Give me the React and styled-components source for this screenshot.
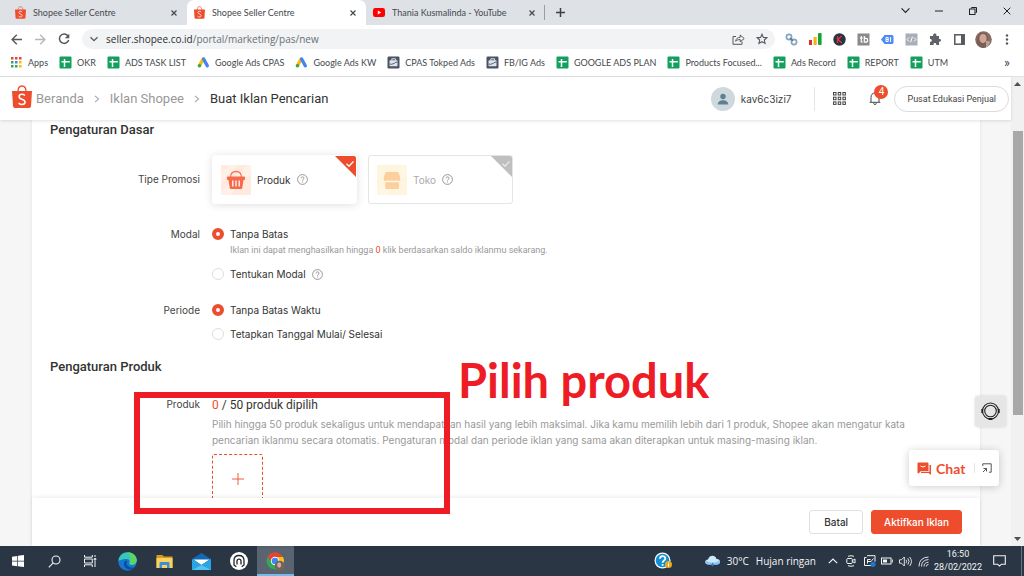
import React from "react";
import styled, { createGlobalStyle, css } from "styled-components";

const ui = '"Open Sans", "Noto Sans", sans-serif';
const uiNarrow = 'Lato, "Open Sans", sans-serif';
const label = "Inter, Roboto, sans-serif";
const orange = "#ee4d2d";

const GlobalStyle = createGlobalStyle`
  *, *::before, *::after { box-sizing: border-box; }
  body { margin: 0; background: #fff; font-family: Roboto, sans-serif; color: #333; }
  button, input { font-family: inherit; }
  h1, h2, p { margin: 0; }
  a { color: inherit; text-decoration: none; }
  svg { display: block; flex: none; }
`;

const Desktop = styled.div`
  position: relative;
  display: flex;
  flex-direction: column;
  height: 100vh;
  overflow: hidden;
`;

const PlainButton = styled.button`
  display: flex;
  align-items: center;
  justify-content: center;
  flex: none;
  padding: 0;
  border: 0;
  background: none;
  color: inherit;
`;

/* Browser chrome */

const TabStrip = styled.div`
  display: flex;
  flex: none;
  height: 25px;
  padding-left: 8px;
  background: #dee1e6;
  font-family: ${uiNarrow};
`;

const Tab = styled.div`
  display: flex;
  align-items: center;
  flex: 0 1 179px;
  min-width: 0;
  gap: 7px;
  padding: 0 9px 0 7px;
  border-radius: 7px 7px 0 0;
  color: #45494d;
  font-size: 9px;
  background: ${(p) => (p.$active ? "#fff" : "transparent")};
  border-right: 1px solid ${(p) => (p.$divided ? "#9a9ea3" : "transparent")};
  ${(p) => p.$divided && css`
    border-radius: 0;
    height: 15px;
    align-self: center;
  `}
`;

const TabTitle = styled.span`
  flex: 1;
  min-width: 0;
  overflow: hidden;
  white-space: nowrap;
`;

const NewTab = styled(PlainButton)`
  width: 31px;
  color: #3c4043;
`;

const WindowControls = styled.div`
  display: flex;
  margin-left: auto;
  height: 21px;
`;

const WindowButton = styled(PlainButton)`
  width: 34px;
  color: #222;
`;

const Toolbar = styled.div`
  display: flex;
  align-items: center;
  flex: none;
  height: 28px;
  padding: 0 5px 0 4px;
  background: #fff;
`;

const ToolButton = styled(PlainButton)`
  width: 24px;
  height: 20px;
  color: ${(p) => (p.$muted ? "#b5b7ba" : "#55595e")};
`;

const Omnibox = styled.div`
  display: flex;
  align-items: center;
  flex: 1;
  min-width: 0;
  height: 20px;
  margin: 0 4px 0 6px;
  padding-right: 1px;
  border-radius: 10px;
  background: #f1f3f4;
`;

const Url = styled.div`
  flex: 1;
  font-family: ${ui};
  font-size: 10px;
  line-height: 16px;
  color: #6b6f74;
  white-space: nowrap;
  b { font-weight: 400; color: #2b2d30; }
`;

const Bookmarks = styled.nav`
  display: flex;
  align-items: center;
  flex: none;
  height: 24px;
  gap: 11px;
  padding: 0 14px 4px 10px;
  border-bottom: 1px solid #dfe1e3;
  font-family: ${uiNarrow};
  font-size: 9px;
  line-height: 16px;
  color: #45494d;
`;

const Bookmark = styled.a`
  display: flex;
  align-items: center;
  gap: 5px;
  white-space: nowrap;
`;

const More = styled(PlainButton)`
  margin-left: auto;
  padding-bottom: 2px;
  font-size: 14px;
  line-height: 16px;
`;

/* Page */

const Viewport = styled.div`
  position: relative;
  display: flex;
  flex: 1;
  min-height: 0;
`;

const Page = styled.div`
  display: flex;
  flex-direction: column;
  flex: 1;
  min-width: 0;
  background: #f6f6f6;
`;

const Header = styled.header`
  position: relative;
  z-index: 1;
  display: flex;
  align-items: center;
  flex: none;
  height: 43px;
  padding: 0 2px 0 12px;
  background: #fff;
  box-shadow: 0 1px 3px rgba(0, 0, 0, 0.12);
`;

const LogoLink = styled.a`
  padding-bottom: 4px;
`;

const Crumbs = styled.nav`
  display: flex;
  align-items: center;
  gap: 10px;
  margin-left: 4px;
  font-size: 13px;
  line-height: 20px;
  color: #999;
  white-space: nowrap;
  span { color: #333; }
`;

const Account = styled.a`
  display: flex;
  align-items: center;
  gap: 6px;
  margin-left: auto;
  padding-right: 23px;
  border-right: 1px solid #e5e5e5;
  font-family: ${label};
  font-size: 10px;
  color: #444;
`;

const Bell = styled(PlainButton)`
  position: relative;
  width: 22px;
  height: 24px;
  margin: 0 8px 0 18px;
  color: #444;
`;

const AppsButton = styled(PlainButton)`
  width: 14px;
  margin-left: 17px;
  color: #444;
`;

const Badge = styled.span`
  position: absolute;
  top: -2px;
  right: -2px;
  width: 14px;
  border-radius: 7px;
  background: ${orange};
  color: #fff;
  font-size: 10px;
  line-height: 14px;
  text-align: center;
`;

const PillButton = styled.button`
  height: 26px;
  padding: 0 12px;
  border: 1px solid #dcdcdc;
  border-radius: 13px;
  background: #fff;
  color: #444;
  font-size: 9px;
  white-space: nowrap;
`;

const Card = styled.main`
  display: flex;
  flex-direction: column;
  flex: 1;
  min-height: 0;
  margin: 0 31px 0 32px;
  background: #fff;
  box-shadow: 0 0 3px rgba(0, 0, 0, 0.1);
`;

const Form = styled.form`
  flex: 1;
  min-height: 0;
  overflow: hidden;
  padding-top: 2px;
`;

const SectionTitle = styled.h2`
  margin-top: ${(p) => (p.$spaced ? 17 : 0)}px;
  padding-left: 18px;
  font-size: 13px;
  font-weight: 500;
  line-height: 16px;
  color: #333;
`;

const Row = styled.section`
  display: grid;
  grid-template-columns: 168px minmax(0, 1fr);
  column-gap: 12px;
  margin-top: ${(p) => p.$top || 20}px;
`;

const RowLabel = styled.div`
  font-family: ${label};
  font-size: 10px;
  line-height: ${(p) => (p.$tall ? 48 : 16)}px;
  text-align: right;
  color: #444;
`;

const Choices = styled.div`
  display: flex;
  gap: 11px;
  padding-bottom: 2px;
`;

const TypeCard = styled.button`
  position: relative;
  display: flex;
  align-items: center;
  gap: 6px;
  width: 145px;
  height: 49px;
  padding: 0 8px;
  overflow: hidden;
  border: 1px solid ${(p) => (p.$active ? "#fff" : "#e5e5e5")};
  border-radius: 3px;
  background: #fff;
  color: ${(p) => (p.$active ? "#333" : "#aaa")};
  font-family: ${label};
  font-size: 10px;
  box-shadow: ${(p) => (p.$active ? "0 1px 9px rgba(0, 0, 0, 0.13)" : "none")};
`;

const Corner = styled.svg`
  position: absolute;
  top: 0;
  right: 0;
`;

const Options = styled.div`
  display: flex;
  flex-direction: column;
  gap: 8px;
`;

const Option = styled.label`
  display: flex;
  align-items: center;
  gap: 6px;
  font-family: ${label};
  font-size: 10px;
  line-height: 16px;
  color: #333;
`;

const Radio = styled.input`
  appearance: none;
  flex: none;
  width: 12px;
  height: 12px;
  margin: 0;
  border: 1px solid #dedede;
  border-radius: 50%;
  background: #fff;
  &:checked { border: 4px solid ${orange}; }
`;

const Hint = styled.p`
  padding-left: 18px;
  font-size: 9px;
  line-height: 16px;
  color: #999;
  em { font-style: normal; color: ${orange}; }
`;

const Count = styled.p`
  font-size: 12px;
  line-height: 18px;
  color: #333;
  em { font-style: normal; color: ${orange}; }
`;

const Description = styled.p`
  max-width: 720px;
  margin-top: 2px;
  font-family: ${label};
  font-size: 10px;
  line-height: 16px;
  color: #999;
`;

const AddProduct = styled(PlainButton)`
  width: 51px;
  height: 50px;
  margin-top: 6px;
  border: 1px dashed ${orange};
  border-radius: 2px;
  color: ${orange};
`;

const Footer = styled.footer`
  display: flex;
  align-items: center;
  justify-content: flex-end;
  flex: none;
  gap: 8px;
  height: 48px;
  padding-right: 18px;
  background: #fff;
  box-shadow: 0 -1px 4px rgba(0, 0, 0, 0.08);
`;

const Action = styled.button`
  height: 24px;
  padding: 0 ${(p) => (p.$primary ? 12 : 14)}px;
  border: 1px solid ${(p) => (p.$primary ? orange : "#e0e0e0")};
  border-radius: 3px;
  background: ${(p) => (p.$primary ? orange : "#fff")};
  color: ${(p) => (p.$primary ? "#fff" : "#333")};
  font-family: ${label};
  font-size: 10px;
  font-weight: 500;
`;

const Scrollbar = styled.div`
  display: flex;
  flex-direction: column;
  align-items: center;
  flex: none;
  width: 13px;
  padding: 5px 0;
  background: #f1f1f1;
  color: #505050;
`;

const Track = styled.div`
  flex: 1;
  width: 10px;
  padding-top: 45px;
`;

const Thumb = styled.div`
  height: 70%;
  background: #a8a8a8;
`;

const Support = styled(PlainButton)`
  position: absolute;
  right: 18px;
  bottom: 119px;
  z-index: 2;
  width: 31px;
  height: 31px;
  border-radius: 3px;
  background: #e6e6e6;
  box-shadow: 0 0 3px rgba(0, 0, 0, 0.15);
  color: #222;
`;

const Chat = styled.div`
  position: absolute;
  right: 25px;
  bottom: 60px;
  z-index: 2;
  display: flex;
  align-items: center;
  width: 90px;
  height: 36px;
  padding: 0 7px 0 8px;
  border-radius: 3px;
  background: #fff;
  box-shadow: 0 1px 8px rgba(0, 0, 0, 0.2);
`;

const ChatButton = styled(PlainButton)`
  gap: 5px;
  color: ${orange};
  font-family: Lato, sans-serif;
  font-size: 14px;
  font-weight: 700;
`;

const ChatExpand = styled(PlainButton)`
  margin-left: auto;
  padding-left: 7px;
  border-left: 1px solid #e5e5e5;
  color: #555;
`;

/* Markup drawn over the page */

const Highlight = styled.div`
  position: absolute;
  left: 134px;
  top: 315px;
  z-index: 3;
  width: 316px;
  height: 122px;
  border: 6px solid #ee1c25;
  pointer-events: none;
`;

const Callout = styled.div`
  position: absolute;
  left: 458px;
  top: 275px;
  z-index: 3;
  color: #ee1c25;
  font-family: Lato, sans-serif;
  font-size: 47px;
  font-weight: 700;
  line-height: 56px;
  white-space: nowrap;
`;

/* Taskbar */

const Taskbar = styled.footer`
  display: flex;
  align-items: stretch;
  flex: none;
  height: 30px;
  background: #2a3644;
  color: #f2f4f6;
  font-family: ${ui};
`;

const SystemButtons = styled.div`
  display: flex;
  margin-right: 1px;
`;

const TaskButton = styled(PlainButton)`
  width: ${(p) => (p.$app ? 37 : 36)}px;
  background: ${(p) => (p.$active ? "#596470" : "none")};
  border-bottom: 2px solid ${(p) => (p.$active ? "#76b9ed" : "transparent")};
  border-top: 2px solid transparent;
`;

const Tray = styled.div`
  display: flex;
  align-items: center;
  margin-left: auto;
`;

const HelpButton = styled(PlainButton)`
  margin-right: 33px;
`;

const Weather = styled(PlainButton)`
  gap: 7px;
  margin-right: 8px;
  font-size: 10px;
  white-space: nowrap;
`;

const TrayButton = styled(PlainButton)`
  width: 18px;
`;

const Clock = styled.div`
  width: 52px;
  font-family: Roboto, sans-serif;
  font-size: 9px;
  line-height: 13px;
  text-align: center;
`;

const NotifyButton = styled(PlainButton)`
  width: 30px;
  height: 30px;
  margin-right: 7px;
`;

const ShowDesktop = styled(PlainButton)`
  width: 3px;
  height: 30px;
  border-left: 1px solid #6b747e;
`;

/* Icons */

const Icon = ({ w = 12, h, vb, children, ...rest }) => (
  <svg width={w} height={h || w} viewBox={vb || `0 0 ${w} ${h || w}`} fill="none" stroke="currentColor" aria-hidden="true" {...rest}>
    {children}
  </svg>
);

const ShopeeIcon = ({ size }) => (
  <Icon w={size} h={Math.round(size * 1.15)} vb="0 0 20 23" stroke="none">
    <path d="M0 6h20l-1 15.2q-.1 1.8-2 1.8H3q-1.900 0-2-1.800z" fill={orange} />
    <path d="M6 6.500C6 2.800 7.500 1 10 1s4 1.800 4 5.500" stroke={orange} strokeWidth="1.300" />
    <path d="M13 10.500q-1.400-1.200-3-1.200c-3.800 0-3.800 4 0 4.900 4.200 1.200 3.900 5.300 0 5.300q-1.900 0-3.400-1.400" stroke="#fff" strokeWidth="1.500" />
  </Icon>
);

const YoutubeIcon = () => (
  <Icon w={12} h={9} stroke="none">
    <rect width="12" height="9" rx="2.200" fill="#f00" />
    <path d="M4.800 2.500v4L8.200 4.500z" fill="#fff" />
  </Icon>
);

const CloseIcon = ({ size = 6, sw = 1.6 }) => (
  <Icon w={size} vb="0 0 8 8" strokeWidth={sw}><path d="M.7.7l6.600 6.600M7.300.7L.7 7.300" /></Icon>
);

const PlusIcon = ({ size, sw = 1 }) => (
  <Icon w={size} vb="0 0 12 12" strokeWidth={sw}><path d="M6 0v12M0 6h12" /></Icon>
);

const ChevronDown = ({ size = 8, sw = 1.2 }) => (
  <Icon w={size} vb="0 0 8 8" strokeWidth={sw}><path d="M.5 2.200L4 5.700l3.500-3.500" /></Icon>
);

const ChevronRight = () => (
  <Icon w={6} h={8} strokeWidth="1.100" stroke="#aaa"><path d="M1 .8L4.600 4 1 7.200" /></Icon>
);

const SheetIcon = () => (
  <Icon w={13} stroke="none">
    <rect x=".5" y=".5" width="12" height="12" rx="1" fill="#12a05c" />
    <path d="M5.500 3v8M2.500 5.700h8.300" stroke="#fff" strokeWidth="1.500" />
  </Icon>
);

const AdsIcon = () => (
  <Icon w={13} stroke="none" strokeLinecap="round">
    <path d="M6 3.300L2.500 9.500" stroke="#fbbc04" strokeWidth="3.400" />
    <path d="M6.600 3L10.300 9.700" stroke="#4285f4" strokeWidth="3.400" />
    <circle cx="2.500" cy="9.700" r="1.800" fill="#34a853" />
  </Icon>
);

const CaseIcon = () => (
  <Icon w={13} stroke="none">
    <rect x=".5" y=".5" width="12" height="12" rx="1.200" fill="#4a5364" />
    <path d="M4.800 4.500V2.800h3.800v1.700" stroke="#dfe3ea" strokeWidth="1" />
    <rect x="2.500" y="4.300" width="8" height="6" rx=".7" fill="#dfe3ea" />
    <path d="M2.500 8l2 .3 3-1 1.500-1.200 1.500.2" stroke="#4a5364" strokeWidth=".9" />
  </Icon>
);

const AppsIcon = () => (
  <Icon w={13} h={11} stroke="none">
    {["#ea4335", "#ea4335", "#ea4335", "#34a853", "#4285f4", "#fbbc04", "#34a853", "#34a853", "#fbbc04"].map((c, i) => (
      <rect key={i} x={1 + (i % 3) * 4} y={Math.floor(i / 3) * 4} width="2.500" height="2.500" fill={c} />
    ))}
  </Icon>
);

const HelpIcon = () => (
  <Icon w={11} stroke="#8c8c8c" strokeWidth=".9">
    <circle cx="5.500" cy="5.500" r="4.900" />
    <path d="M4 4.400c0-2 3-2 3-.2 0 1.200-1.500 1.200-1.500 2.500M5.500 7.600v.9" />
  </Icon>
);

const CheckCorner = ({ color, mark }) => (
  <Corner width="21" height="21" viewBox="0 0 21 21" fill="none" aria-hidden="true">
    <path d="M0 0h21v21z" fill={color} />
    <path d="M11.500 7.700l2.500 2.600 4.500-4.900" stroke={mark} strokeWidth="1.300" />
  </Corner>
);

const BasketIcon = () => (
  <Icon w={30} stroke="none">
    <rect width="30" height="30" fill="#ffeadd" />
    <path d="M0 8L8 0h9L0 17zM0 27L27 0h3v9L9 30H0z" fill="#fff1e8" />
    <path d="M9.500 12.500c0-4.500 2-6 5.500-6s5.500 1.500 5.500 6" stroke="#f7755a" strokeWidth="1.300" />
    <rect x="6" y="11.500" width="18" height="3.600" rx=".8" fill="#f7694b" />
    <path d="M7.500 15h15l-1.300 8.200q-.1.800-1 .8H9.800q-.9 0-1-.8z" fill="#f7694b" />
    <path d="M11.800 15.500v6M15 15.500v6M18.200 15.500v6" stroke="#fff" strokeWidth="1.300" />
  </Icon>
);

const StoreIcon = () => (
  <Icon w={30} stroke="none">
    <rect width="30" height="30" fill="#fff4dd" />
    <path d="M0 27L27 0h3v9L9 30H0z" fill="#fff7e6" />
    <path d="M9.500 7h11q1 0 1.300 1l1.500 5q.5 3-1.700 3-1.800 0-2.200-1-.8 1-2.200 1T15 15q-.8 1-2.200 1t-2.200-1q-.8 1-2.200 1-2 0-1.700-3l1.500-5q.3-1 1.300-1z" fill="#fbcf9e" />
    <path d="M8.200 17.500q1.700 0 2.400-.8 1 .8 2.200.8t2.200-.8q1 .8 2.200.8t2.200-.8q.8.800 2.600.8v5q0 1.500-1.500 1.500H9.700q-1.500 0-1.500-1.500z" fill="#fbcf9e" />
  </Icon>
);

const ShareIcon = () => (
  <Icon w={13} h={12}>
    <path d="M4 3.500H1v7.800h9V8.500" />
    <path d="M3.700 8.300c.3-2.700 2-4 4.500-4V2l4 3.500-4 3.300V6.500c-2 0-3.300.5-4.500 1.800z" />
  </Icon>
);

const StarIcon = () => (
  <Icon w={12} strokeWidth="1.100"><path d="M6 1.200l1.400 3.200 3.500.3L8.300 7l.8 3.500L6 8.700l-3.100 1.800L3.700 7 1.100 4.700l3.500-.3z" /></Icon>
);

const extensions = [
  ["Link checker", <Icon w={13} strokeWidth="1.700" stroke="#86a5bd"><circle cx="4" cy="4" r="2.600" /><circle cx="9" cy="9" r="2.600" /><path d="M5 5l3 3" stroke="#5c7c96" /></Icon>],
  ["Traffic bars", <Icon w={13} h={12} stroke="none"><rect y="7" width="3" height="5" fill="#e22b2b" /><rect x="4.500" y="4" width="3.200" height="8" fill="#f3b51c" /><rect x="9" width="3.600" height="12" rx="1" fill="#14a432" /></Icon>],
  ["Keywords", <Icon w={13} stroke="none"><circle cx="6.500" cy="6.500" r="6.200" fill="#263442" /><path d="M4.500 3v7M8.600 3L5 6.500 8.800 10" stroke="#e0323b" strokeWidth="1.300" /></Icon>],
  ["Tag buddy", <Icon w={13} stroke="none"><rect x=".5" y=".5" width="12" height="12" fill="#8a8a8a" /><path d="M4.300 3v6h1.500M2.800 5h3M7.300 3v6.200h1.500q1.800 0 1.800-2T8.800 5.300H7.300" stroke="#fff" strokeWidth="1.200" /></Icon>],
  ["Label tool", <Icon w={13} stroke="none"><path d="M0 6.500L3.500 2H11q1.500 0 1.500 1.500v6Q12.500 11 11 11H3.500z" fill="#4c8bf5" /><path d="M5 4.500h2.200v4H5zM5 6.500h2.200M9.600 4v5" stroke="#fff" /></Icon>],
  ["Code view", <Icon w={13} stroke="none"><rect x=".5" y=".5" width="12" height="12" fill="#a9adb6" /><path d="M4 4.500l-2 2 2 2M9 4.500l2 2-2 2M7.400 3.800L5.600 9.200" stroke="#fff" /></Icon>],
  ["Extensions", <Icon w={12} stroke="none"><path d="M1 3h3.200c-.8-3.300 4-3.300 3.200 0H10v3c2.700-.6 2.700 3.200 0 2.700V12H7.200c.6-2.600-3.200-2.600-2.600 0H1V8.700c2.400.5 2.400-3 0-2.600z" fill="#5f6368" /></Icon>],
  ["Side panel", <Icon w={11} strokeWidth="1.500" stroke="#55595e"><rect x=".8" y=".8" width="9.400" height="9.400" /><path d="M7 1h3v9H7z" fill="#55595e" stroke="none" /></Icon>],
];

const ProfileIcon = () => (
  <Icon w={17} stroke="none">
    <circle cx="8.500" cy="8.500" r="8.300" fill="#8a6c62" />
    <path d="M2 13.500C1 6 4 1.500 8 1.500s6 4 5 10l-2 5q-6 1.500-9-3z" fill="#7a5f57" />
    <ellipse cx="8" cy="7.500" rx="3.600" ry="4.600" fill="#cfa596" />
    <path d="M11 10q4-1 4 1.500-1 3.500-4 5z" fill="#b3a19c" />
  </Icon>
);

const Dots = () => (
  <Icon w={4} h={11} stroke="none" fill="#55595e">
    <circle cx="2" cy="1.500" r="1.200" /><circle cx="2" cy="5.500" r="1.200" /><circle cx="2" cy="9.500" r="1.200" />
  </Icon>
);

const bookmarks = [
  [AppsIcon, "Apps"],
  [SheetIcon, "OKR"],
  [SheetIcon, "ADS TASK LIST"],
  [AdsIcon, "Google Ads CPAS"],
  [AdsIcon, "Google Ads KW"],
  [CaseIcon, "CPAS Tokped Ads"],
  [CaseIcon, "FB/IG Ads"],
  [SheetIcon, "GOOGLE ADS PLAN"],
  [SheetIcon, "Products Focused..."],
  [SheetIcon, "Ads Record"],
  [SheetIcon, "REPORT"],
  [SheetIcon, "UTM"],
];

const Browser = () => (
  <>
    <TabStrip>
      <Tab>
        <ShopeeIcon size={11} />
        <TabTitle>Shopee Seller Centre</TabTitle>
        <PlainButton aria-label="Close tab"><CloseIcon /></PlainButton>
      </Tab>
      <Tab $active>
        <ShopeeIcon size={11} />
        <TabTitle>Shopee Seller Centre</TabTitle>
        <PlainButton aria-label="Close tab"><CloseIcon /></PlainButton>
      </Tab>
      <Tab $divided>
        <YoutubeIcon />
        <TabTitle>Thania Kusmalinda - YouTube</TabTitle>
        <PlainButton aria-label="Close tab"><CloseIcon /></PlainButton>
      </Tab>
      <NewTab aria-label="New tab"><PlusIcon size={9} sw={2} /></NewTab>
      <WindowControls>
        <WindowButton aria-label="Search tabs"><ChevronDown size={9} sw={1} /></WindowButton>
        <WindowButton aria-label="Minimise"><Icon w={8} h={2}><path d="M0 1h8" /></Icon></WindowButton>
        <WindowButton aria-label="Restore"><Icon w={8}><path d="M2.500 1.500v-1h5v5h-1" /><rect x=".5" y="2" width="5.500" height="5.500" /></Icon></WindowButton>
        <WindowButton aria-label="Close"><CloseIcon size={8} sw={1} /></WindowButton>
      </WindowControls>
    </TabStrip>
    <Toolbar>
      <ToolButton aria-label="Back"><Icon w={11} strokeWidth="1.400"><path d="M11 5.500H1.200M5.800.8L1.100 5.500l4.700 4.700" /></Icon></ToolButton>
      <ToolButton $muted aria-label="Forward"><Icon w={11} strokeWidth="1.300"><path d="M0 5.500h9.800M5.200.8l4.700 4.700-4.700 4.700" /></Icon></ToolButton>
      <ToolButton aria-label="Reload"><Icon w={12} strokeWidth="1.500"><path d="M10.300 3.400A4.700 4.700 0 1 0 10.700 7" /><path d="M11.300.7v4.500H6.800z" fill="currentColor" stroke="none" /></Icon></ToolButton>
      <Omnibox>
        <ToolButton aria-label="Site details"><ChevronDown sw={1.300} /></ToolButton>
        <Url><b>seller.shopee.co.id</b>/portal/marketing/pas/new</Url>
        <ToolButton aria-label="Share"><ShareIcon /></ToolButton>
        <ToolButton aria-label="Bookmark this tab"><StarIcon /></ToolButton>
      </Omnibox>
      {extensions.map(([name, icon]) => (
        <ToolButton key={name} aria-label={name}>{icon}</ToolButton>
      ))}
      <ToolButton aria-label="Profile"><ProfileIcon /></ToolButton>
      <ToolButton aria-label="Menu"><Dots /></ToolButton>
    </Toolbar>
    <Bookmarks>
      {bookmarks.map(([Glyph, name]) => (
        <Bookmark href="#" key={name}><Glyph />{name}</Bookmark>
      ))}
      <More aria-label="More bookmarks">»</More>
    </Bookmarks>
  </>
);

const PageHeader = () => (
  <Header>
    <LogoLink href="#" aria-label="Shopee"><ShopeeIcon size={20} /></LogoLink>
    <Crumbs>
      <a href="#">Beranda</a><ChevronRight />
      <a href="#">Iklan Shopee</a><ChevronRight />
      <span>Buat Iklan Pencarian</span>
    </Crumbs>
    <Account href="#">
      <Icon w={24} stroke="none">
        <circle cx="12" cy="12" r="12" fill="#cfd8dc" />
        <circle cx="12" cy="9.500" r="2.700" fill="#5f8093" />
        <path d="M6.800 17.500c0-5.600 10.400-5.600 10.400 0z" fill="#5f8093" />
      </Icon>
      kav6c3izi7
    </Account>
    <AppsButton aria-label="Apps">
      <Icon w={13} strokeWidth="1">
        {[0, 1, 2, 3, 4, 5, 6, 7, 8].map((i) => (
          <rect key={i} x={0.5 + (i % 3) * 4.700} y={0.5 + Math.floor(i / 3) * 4.700} width="2.500" height="2.500" />
        ))}
      </Icon>
    </AppsButton>
    <Bell aria-label="Notifications">
      <Icon w={12} h={13}><path d="M.7 10.300h10.600M2 10V5.500C2 2.500 3.500 1 6 1s4 1.500 4 4.500V10M4.700 11.200q.1 1.300 1.300 1.300t1.300-1.300" /></Icon>
      <Badge>4</Badge>
    </Bell>
    <PillButton>Pusat Edukasi Penjual</PillButton>
  </Header>
);

const AdForm = () => (
  <Form>
    <SectionTitle>Pengaturan Dasar</SectionTitle>
    <Row $top={17}>
      <RowLabel $tall>Tipe Promosi</RowLabel>
      <Choices>
        <TypeCard type="button" $active aria-pressed="true">
          <BasketIcon />Produk <HelpIcon /><CheckCorner color={orange} mark="#fff" />
        </TypeCard>
        <TypeCard type="button" aria-pressed="false">
          <StoreIcon />Toko <HelpIcon /><CheckCorner color="#bfbfbf" mark="#e8e8e8" />
        </TypeCard>
      </Choices>
    </Row>
    <Row>
      <RowLabel>Modal</RowLabel>
      <Options>
        <div>
          <Option><Radio type="radio" name="modal" defaultChecked />Tanpa Batas</Option>
          <Hint>Iklan ini dapat menghasilkan hingga <em>0</em> klik berdasarkan saldo iklanmu sekarang.</Hint>
        </div>
        <Option><Radio type="radio" name="modal" />Tentukan Modal<HelpIcon /></Option>
      </Options>
    </Row>
    <Row>
      <RowLabel>Periode</RowLabel>
      <Options>
        <Option><Radio type="radio" name="periode" defaultChecked />Tanpa Batas Waktu</Option>
        <Option><Radio type="radio" name="periode" />Tetapkan Tanggal Mulai/ Selesai</Option>
      </Options>
    </Row>
    <SectionTitle $spaced>Pengaturan Produk</SectionTitle>
    <Row $top={21}>
      <RowLabel>Produk</RowLabel>
      <div>
        <Count><em>0</em> / 50 produk dipilih</Count>
        <Description>
          Pilih hingga 50 produk sekaligus untuk mendapatkan hasil yang lebih maksimal. Jika kamu memilih lebih dari 1 produk, Shopee akan mengatur kata pencarian iklanmu secara otomatis. Pengaturan modal dan periode iklan yang sama akan diterapkan untuk masing-masing iklan.
        </Description>
        <AddProduct type="button" aria-label="Tambah produk"><PlusIcon size={12} sw={0.9} /></AddProduct>
      </div>
    </Row>
  </Form>
);

const BottomBar = () => (
  <Taskbar>
    <SystemButtons>
      <TaskButton aria-label="Start"><Icon w={12} stroke="none" fill="#fff"><path d="M0 1.700l5.300-.8v4.800H0zM6 .8L12 0v5.700H6zM0 6.400h5.300v4.800L0 10.400zM6 6.400h6V12l-6-.8z" /></Icon></TaskButton>
      <TaskButton aria-label="Search"><Icon w={13} strokeWidth="1.100"><circle cx="8" cy="5" r="4" /><path d="M5.200 7.900L.8 12.300" /></Icon></TaskButton>
      <TaskButton aria-label="Task view"><Icon w={13} h={12}><path d="M.5 0v2.200h7.800V0M.5 12V9.800h7.800V12M.5 4h7.800v4H.5zM11 0v2M11 6v6M10.200 3.500h1.600v1.500h-1.600z" /></Icon></TaskButton>
    </SystemButtons>
    <TaskButton $app aria-label="Edge">
      <Icon w={19} stroke="none">
        <circle cx="9.500" cy="9.500" r="9.200" fill="#1478cf" />
        <path d="M.4 9C1 3.500 5 .3 9.500.3c5.500 0 9.200 3.900 9.200 7.700 0 3.500-2.700 4.700-4.700 4.700-1.700 0-2.800-.7-2.600-1.500.8-1.200.6-4.200-2.700-4.200C4.500 7-.2 9 .4 9z" fill="#3ac6b8" />
        <path d="M10 .3c5.200.2 8.700 3.900 8.700 7.700 0 3.500-2.700 4.700-4.700 4.700-1.700 0-2.800-.7-2.600-1.500 2-3.700.6-8-1.400-10.900z" fill="#5ad46b" />
        <path d="M6 11c-.5 3.500 2.500 6.500 6 6.500 2 0 4-1 5-2.500-3 1.500-8.500.5-8.500-4 0-1 .5-1.500 1-2C7.500 8.500 6.200 9.500 6 11z" fill="#0b4c9c" />
      </Icon>
    </TaskButton>
    <TaskButton $app aria-label="File Explorer">
      <Icon w={17} h={15} stroke="none">
        <path d="M.5 1h6l1.300 1.500h8.700V14H.5z" fill="#d99a1c" />
        <path d="M.5 4h16v10H.5z" fill="#fbd25e" />
        <path d="M3.500 14V9q0-1 1-1h8q1 0 1 1v5H11v-3H6v3z" fill="#3a8fdc" />
      </Icon>
    </TaskButton>
    <TaskButton $app aria-label="Mail">
      <Icon w={19} h={17} stroke="none">
        <path d="M0 6L9.500 0 19 6v11H0z" fill="#1168b3" />
        <path d="M1.500 6.500h16L9.500 12z" fill="#fff" />
        <path d="M0 6l9.500 6L19 6v11H0z" fill="#29a4e4" />
        <path d="M0 17l9.500-5L19 17z" fill="#52c3f2" />
      </Icon>
    </TaskButton>
    <TaskButton $app aria-label="Workspace">
      <Icon w={18} stroke="none">
        <circle cx="9" cy="9" r="9" fill="#fff" />
        <path d="M6.300 14.800L4 13V8.500C4 5.300 6 3.500 9 3.500s5 1.800 5 5V13l-2.300 1.800M7 12.500V9.200q0-2 2-2t2 2v3.300" stroke="#20262d" strokeWidth="1.300" />
      </Icon>
    </TaskButton>
    <TaskButton $app $active aria-label="Chrome">
      <Icon w={19} stroke="none">
        <circle cx="9" cy="9" r="8.500" fill="#31a853" />
        <path d="M1.600 4.800a8.500 8.500 0 0 1 14.800 0L9 9.500z" fill="#e54335" />
        <path d="M9 5h8a8.500 8.500 0 0 1-7 12.500l3-7z" fill="#fbc116" />
        <path d="M1.600 4.800L6.500 11 9 5h8L16.400 4.800C13-1 5-1 1.600 4.800z" fill="#e54335" />
        <circle cx="9" cy="9" r="4.200" fill="#fff" />
        <circle cx="9" cy="9" r="3.300" fill="#4285f4" />
        <circle cx="13.800" cy="13.800" r="5" fill="#75645b" />
        <ellipse cx="13.200" cy="13" rx="2" ry="2.700" fill="#cdb1a2" />
      </Icon>
    </TaskButton>
    <Tray>
      <HelpButton aria-label="Help">
        <Icon w={18} stroke="none">
          <circle cx="8.500" cy="8.500" r="8" fill="#fff" /><circle cx="8.500" cy="8.500" r="6.800" fill="#108fd5" />
          <path d="M6 6.700c0-3.400 5.300-3.400 5.300-.3 0 2.200-2.700 2-2.700 4.400M8.600 12v1.800" stroke="#fff" strokeWidth="1.800" />
          <circle cx="14.500" cy="12.500" r="3.500" fill="#e9a91c" /><path d="M14.500 10.500v.8M14.500 12v2.500" stroke="#fff" />
        </Icon>
      </HelpButton>
      <Weather>
        <Icon w={15} h={12} stroke="none">
          <path d="M3.500 9.500C-1 9.500-.5 4.500 3 4.500 4-.5 10.500-.5 11.500 4c4.500-.3 4.500 5.500.5 5.500z" fill="#cfe7fb" />
          <path d="M3.500 9.500C0 9.500-.3 6.500 1.500 5.500q2 2.500 6 2 4 .5 6.700-2.300c1.500 2 .3 4.300-2.200 4.300z" fill="#8ec5f2" />
          <path d="M7.500 7.500q2.200 2.600 0 4-2.200-1.400 0-4z" fill="#1d7fdb" />
        </Icon>
        <span>30°C</span><span>Hujan ringan</span>
      </Weather>
      <TrayButton aria-label="Show hidden icons"><Icon w={10} h={6} strokeWidth="1.200"><path d="M.8 5.200L5 1l4.200 4.200" /></Icon></TrayButton>
      <TrayButton aria-label="Meet now"><Icon w={10} h={12}><rect x=".8" y="3.500" width="5.500" height="5" rx="1" /><path d="M6.500 5.500L9 4v4L6.500 6.700M2 1.300Q5 .2 8 1.300M2 10.700q3 1.100 6 0" /></Icon></TrayButton>
      <TrayButton aria-label="Input"><Icon w={13} h={12}><path d="M8 10.500H1.500v-8h2M4 .7h8v6M4.500 8.500V4.500l3 0M5 6.500h3l2.500-3" /><circle cx="10" cy="9.300" r="2.600" fill="#2277cc" stroke="none" /></Icon></TrayButton>
      <TrayButton aria-label="Battery"><Icon w={12} h={8}><rect x=".5" y="1" width="9.500" height="6" /><path d="M2 2.500h4v3H2z" fill="currentColor" stroke="none" /><path d="M11.300 2.500v3" /></Icon></TrayButton>
      <TrayButton aria-label="Volume"><Icon w={13} h={11} strokeWidth=".9"><path d="M.5 3.800h2L5.300 1v9L2.500 7.200h-2zM7 3.800q1.300 1.700 0 3.400M8.800 2.300q2.500 3.200 0 6.400M10.700 1q3.500 4.500 0 9" /></Icon></TrayButton>
      <TrayButton aria-label="Network"><Icon w={11} strokeWidth=".9"><path d="M1 10.500Q1 1.500 10.500 1M3.500 10.500Q3.500 4 10.500 3.600M6 10.500Q6 6.500 10.500 6.200M8.300 10.500q0-2 2.200-2.200" /></Icon></TrayButton>
      <Clock>16:50<br />28/02/2022</Clock>
      <NotifyButton aria-label="Notifications"><Icon w={13} h={12} strokeWidth="1.100"><path d="M.7.7h11.600v8.500H8.500L6.500 11l-2-1.800H.7z" /></Icon></NotifyButton>
      <ShowDesktop aria-label="Show desktop" />
    </Tray>
  </Taskbar>
);

export default function App() {
  return (
    <Desktop>
      <GlobalStyle />
      <Browser />
      <Viewport>
        <Page>
          <PageHeader />
          <Card>
            <AdForm />
            <Footer>
              <Action>Batal</Action>
              <Action $primary>Aktifkan Iklan</Action>
            </Footer>
          </Card>
        </Page>
        <Scrollbar>
          <Icon w={7} h={4} stroke="none" fill="currentColor"><path d="M0 4L3.500 0 7 4z" /></Icon>
          <Track><Thumb /></Track>
          <Icon w={7} h={4} stroke="none" fill="currentColor"><path d="M0 0L3.500 4 7 0z" /></Icon>
        </Scrollbar>
        <Support aria-label="Bantuan">
          <Icon w={19} strokeWidth="1.100">
            <circle cx="9.500" cy="9" r="8" /><circle cx="9.500" cy="9" r="5.800" />
            <path d="M1.200 7v4M17.800 7v4M7.500 17h4" strokeWidth="1.800" />
          </Icon>
        </Support>
        <Chat>
          <ChatButton>
            <Icon w={14} h={13} stroke="none">
              <path d="M1.500.5h9q1 0 1 1V9H4L1.500 11.500 .5 11V1.500q0-1 1-1z" fill={orange} />
              <path d="M12.500 3h1.500v10l-2.500-2H4v-1.200h8.500z" fill={orange} />
              <path d="M3.500 4q2.500 2 5 0" stroke="#fff" />
            </Icon>
            Chat
          </ChatButton>
          <ChatExpand aria-label="Perbesar"><Icon w={10}><path d="M.8 3V.8h8.400v8.400H7M1 9l3.500-3.500M1.500 5.500h3v3" /></Icon></ChatExpand>
        </Chat>
        <Highlight />
        <Callout>Pilih produk</Callout>
      </Viewport>
      <BottomBar />
    </Desktop>
  );
}
